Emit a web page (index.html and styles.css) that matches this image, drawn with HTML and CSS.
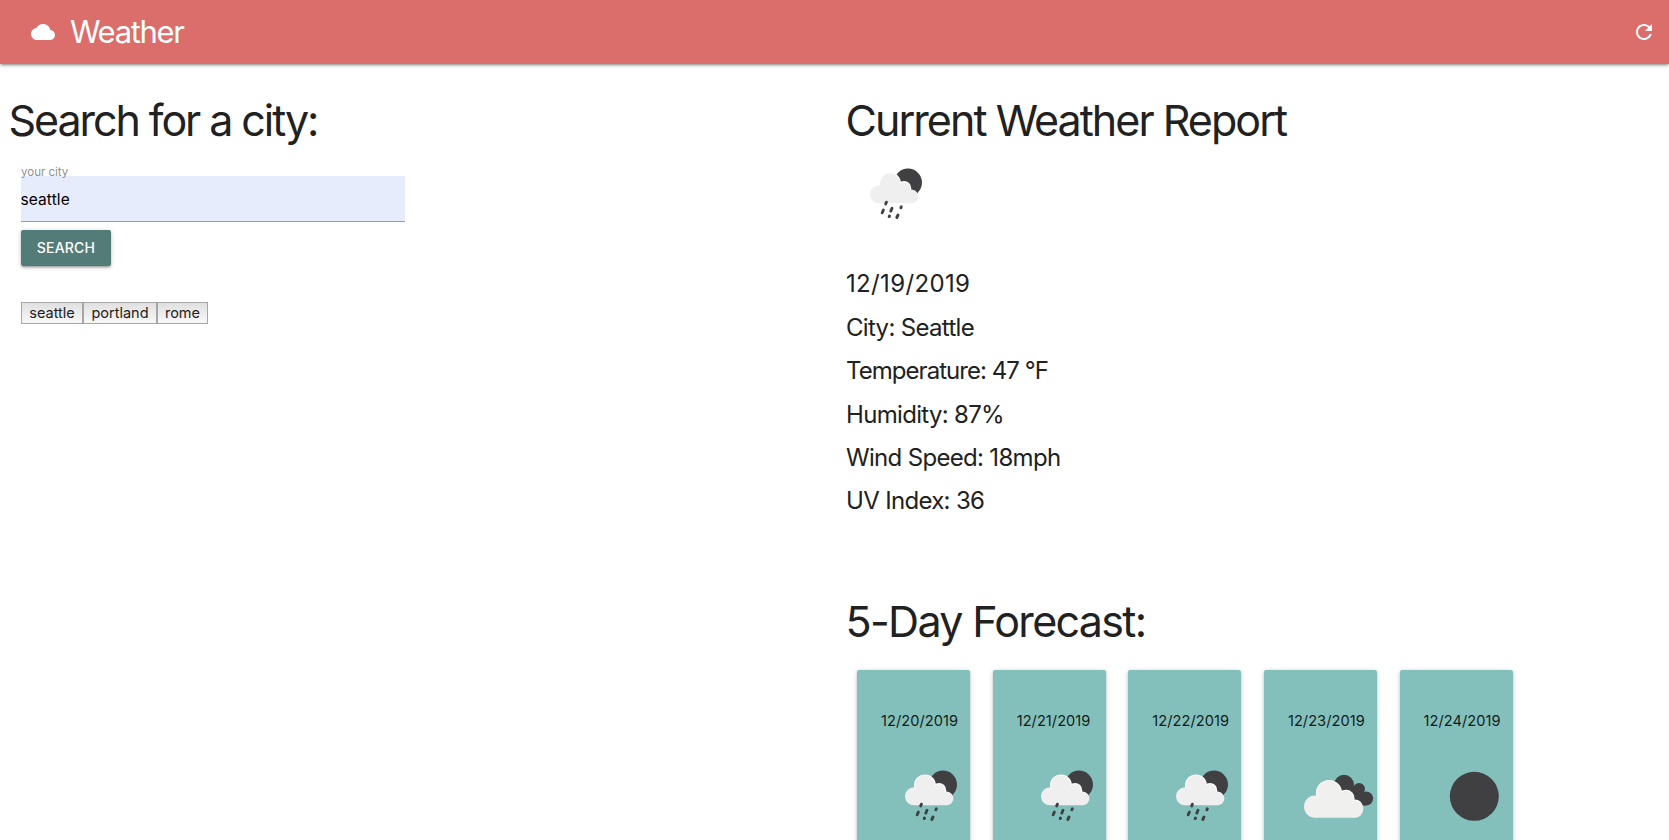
FILE: index.html
```html
<!DOCTYPE html>
<html lang="en">
<head>
<meta charset="utf-8">
<title>Weather</title>
<link rel="stylesheet" href="styles.css">
</head>
<body>
<svg class="defs" aria-hidden="true">
  <symbol id="rain" viewBox="0 0 100 100">
    <circle cx="62" cy="38.6" r="14" fill="#404042"/>
    <g fill="#fff"><circle cx="44" cy="39.3" r="10.9"/><circle cx="58" cy="44.2" r="7.2"/><path d="M58 51 60 46Q65 44 69 46.8 72 49 72.3 52.5L65 58z"/></g>
    <g fill="#efefef"><circle cx="33" cy="50.3" r="9"/><circle cx="44" cy="39.3" r="10"/><circle cx="58" cy="44.2" r="6"/><circle cx="65.5" cy="52.5" r="6.8"/><path d="M33 42h25l7.5 10v7.3H33z"/></g>
    <path d="M40.4 58.2 39.7 59.9M37.4 66 36.2 68.8M46 64.3 44.8 67.1M55.3 62.8 54.9 63.8M43.5 72 43.2 72.6M52 71 50.8 73.5" fill="none" stroke="#404042" stroke-width="2.9" stroke-linecap="round"/>
  </symbol>
  <symbol id="clouds" viewBox="0 0 100 100">
    <g fill="#404042"><circle cx="56" cy="38.7" r="10"/><circle cx="71" cy="43" r="6"/><circle cx="78" cy="52.5" r="7.1"/><path d="M58 40h13l7 10v9.6H58z"/></g>
    <g fill="#fff"><circle cx="41" cy="47" r="13.1"/><circle cx="58" cy="52.2" r="8.5"/><path d="M64 53.7Q74 52 75.3 62L66 66z"/></g>
    <g fill="#f0f0ee"><circle cx="27.1" cy="60.6" r="11.1"/><circle cx="41" cy="47" r="12.3"/><circle cx="58" cy="52.2" r="7.5"/><circle cx="66.7" cy="63.1" r="8.6"/><path d="M27 50h31l8.7 13v8.7H27z"/></g>
  </symbol>
  <symbol id="clear" viewBox="0 0 100 100"><circle cx="50.3" cy="50.3" r="24.5" fill="#404042"/></symbol>
</svg>

<nav class="nav">
  <div class="brand">
    <svg class="icon" viewBox="0 0 24 24"><path d="M19.35 10.04C18.67 6.59 15.64 4 12 4 9.11 4 6.6 5.64 5.35 8.04 2.34 8.36 0 10.91 0 14c0 3.31 2.69 6 6 6h13c2.76 0 5-2.24 5-5 0-2.64-2.05-4.78-4.65-4.96z"/></svg>
    <span class="brand-name">Weather</span>
  </div>
  <svg class="icon" viewBox="0 0 24 24"><path d="M17.65 6.35C16.2 4.9 14.21 4 12 4c-4.42 0-7.99 3.58-7.99 8s3.57 8 7.99 8c3.73 0 6.84-2.55 7.73-6h-2.08c-.82 2.33-3.04 4-5.65 4-3.31 0-6-2.69-6-6s2.69-6 6-6c1.66 0 3.14.69 4.22 1.78L13 11h7V4l-2.35 2.35z"/></svg>
</nav>

<main class="columns">
  <section class="search">
    <h3 class="heading heading-search">Search for a city:</h3>
    <form class="form">
      <label class="label" for="city">your city</label>
      <input class="input" id="city" type="text" value="seattle">
      <button class="search-button" type="button">SEARCH</button>
      <div class="history">
        <button class="chip chip-seattle" type="button">seattle</button>
        <button class="chip chip-portland" type="button">portland</button>
        <button class="chip chip-rome" type="button">rome</button>
      </div>
    </form>
  </section>

  <section class="report">
    <h3 class="heading heading-report">Current Weather Report</h3>
    <svg class="weather"><use href="#rain"/></svg>
    <div class="details">
      <h5 class="detail detail-date">12/19/2019</h5>
      <h5 class="detail">City: Seattle</h5>
      <h5 class="detail detail-temperature">Temperature: 47 °F</h5>
      <h5 class="detail">Humidity: 87%</h5>
      <h5 class="detail">Wind Speed: 18mph</h5>
      <h5 class="detail">UV Index: 36</h5>
    </div>
    <h3 class="heading heading-forecast">5-Day Forecast:</h3>
    <div class="cards">
      <div class="card"><p class="date">12/20/2019</p><svg class="weather"><use href="#rain"/></svg></div>
      <div class="card"><p class="date">12/21/2019</p><svg class="weather"><use href="#rain"/></svg></div>
      <div class="card"><p class="date">12/22/2019</p><svg class="weather"><use href="#rain"/></svg></div>
      <div class="card"><p class="date">12/23/2019</p><svg class="weather"><use href="#clouds"/></svg></div>
      <div class="card"><p class="date">12/24/2019</p><svg class="weather"><use href="#clear"/></svg></div>
    </div>
  </section>
</main>
</body>
</html>
```
FILE: styles.css
```css
* { box-sizing: border-box; }
html, body { height: 100%; }
body {
  margin: 0;
  display: flex;
  flex-direction: column;
  overflow: hidden;
  background: #fff;
  color: #212121;
  font: 15px/1.5 Inter, "Liberation Sans", sans-serif;
}
.defs { display: none; }

.nav {
  flex: none;
  height: 64px;
  padding: 0 13px 0 31px;
  display: flex;
  align-items: center;
  justify-content: space-between;
  background: #db6e6a;
  color: #fff;
  box-shadow: 0 2px 2px 0 rgba(0,0,0,.14), 0 3px 1px -2px rgba(0,0,0,.12), 0 1px 5px 0 rgba(0,0,0,.2);
}
.brand { display: flex; align-items: center; gap: 15px; }
.brand-name { font-size: 31px; font-weight: 430; line-height: 64px; letter-spacing: -1.35px; }
.icon { display: block; width: 24px; height: 24px; fill: currentColor; }

.columns { flex: 1; min-height: 0; overflow: hidden; display: grid; grid-template-columns: 846px 1fr; }
.search { padding: 32px 0 0 9px; }
.report { padding-top: 32px; }

.heading { margin: 0 0 0 -.5px; font-size: 43px; font-weight: 410; line-height: 48px; white-space: nowrap; }
.heading-search { letter-spacing: -2.07px; }
.heading-report { letter-spacing: -1.95px; }
.heading-forecast { letter-spacing: -1.67px; margin-top: 83.2px; }

.form { width: 384px; margin: 19px 0 0 12px; display: flex; flex-direction: column; align-items: flex-start; }
.label { height: 14px; font-size: 11.6px; line-height: 18px; letter-spacing: -.05px; color: #8f8f8f; position: relative; z-index: 1; }
.input {
  width: 384px; height: 46px; margin: -1px 0 0; padding: 1px 0 0;
  border: 0; border-bottom: 1px solid #9e9e9e; border-radius: 0;
  background: #e7ecfd; color: #000;
  font: 15.5px Inter, "Liberation Sans", sans-serif; letter-spacing: .1px;
  text-indent: -.5px;
  outline: 0;
}
.search-button {
  width: 90px; height: 36px; margin-top: 8px; padding: 0;
  border: 0; border-radius: 2px; background: #537b77; color: #fff;
  font: 450 14px/36px Inter, "Liberation Sans", sans-serif; letter-spacing: .2px;
  box-shadow: 0 2px 2px 0 rgba(0,0,0,.14), 0 3px 1px -2px rgba(0,0,0,.12), 0 1px 5px 0 rgba(0,0,0,.2);
}
.history { display: flex; margin-top: 36px; }
.chip {
  height: 22px; padding: 0;
  border: 1px solid #a6a6a6; border-radius: 0;
  background: linear-gradient(#e0e0e0, #f8f8f8); color: #212121;
  font: 14.5px/20px Inter, "Liberation Sans", sans-serif;
}
.chip-seattle { width: 62px; }
.chip-portland { width: 74px; }
.chip-rome { width: 51px; }

.weather { display: block; width: 100px; height: 100px; overflow: visible; }
.report > .weather { margin-top: .4px; }
.details { display: flex; flex-direction: column; gap: 16.38px; margin-top: 26px; }
.detail { margin: 0; font-size: 24px; font-weight: 400; line-height: 27px; letter-spacing: -.68px; }
.detail-date { letter-spacing: .35px; }
.detail-temperature { letter-spacing: -.95px; }

.cards { display: flex; gap: 22.65px; margin: 24.5px 0 0 11px; }
.card {
  flex: none; width: 113px; height: 300px; padding: 40px 0 0 24px;
  border-radius: 2px; background: #84c0bb;
  box-shadow: 0 2px 2px 0 rgba(0,0,0,.14), 0 3px 1px -2px rgba(0,0,0,.12), 0 1px 5px 0 rgba(0,0,0,.2);
}
.date { margin: 0 0 13px; font-size: 14.6px; line-height: 23px; letter-spacing: .05px; color: #111c1b; }
```
